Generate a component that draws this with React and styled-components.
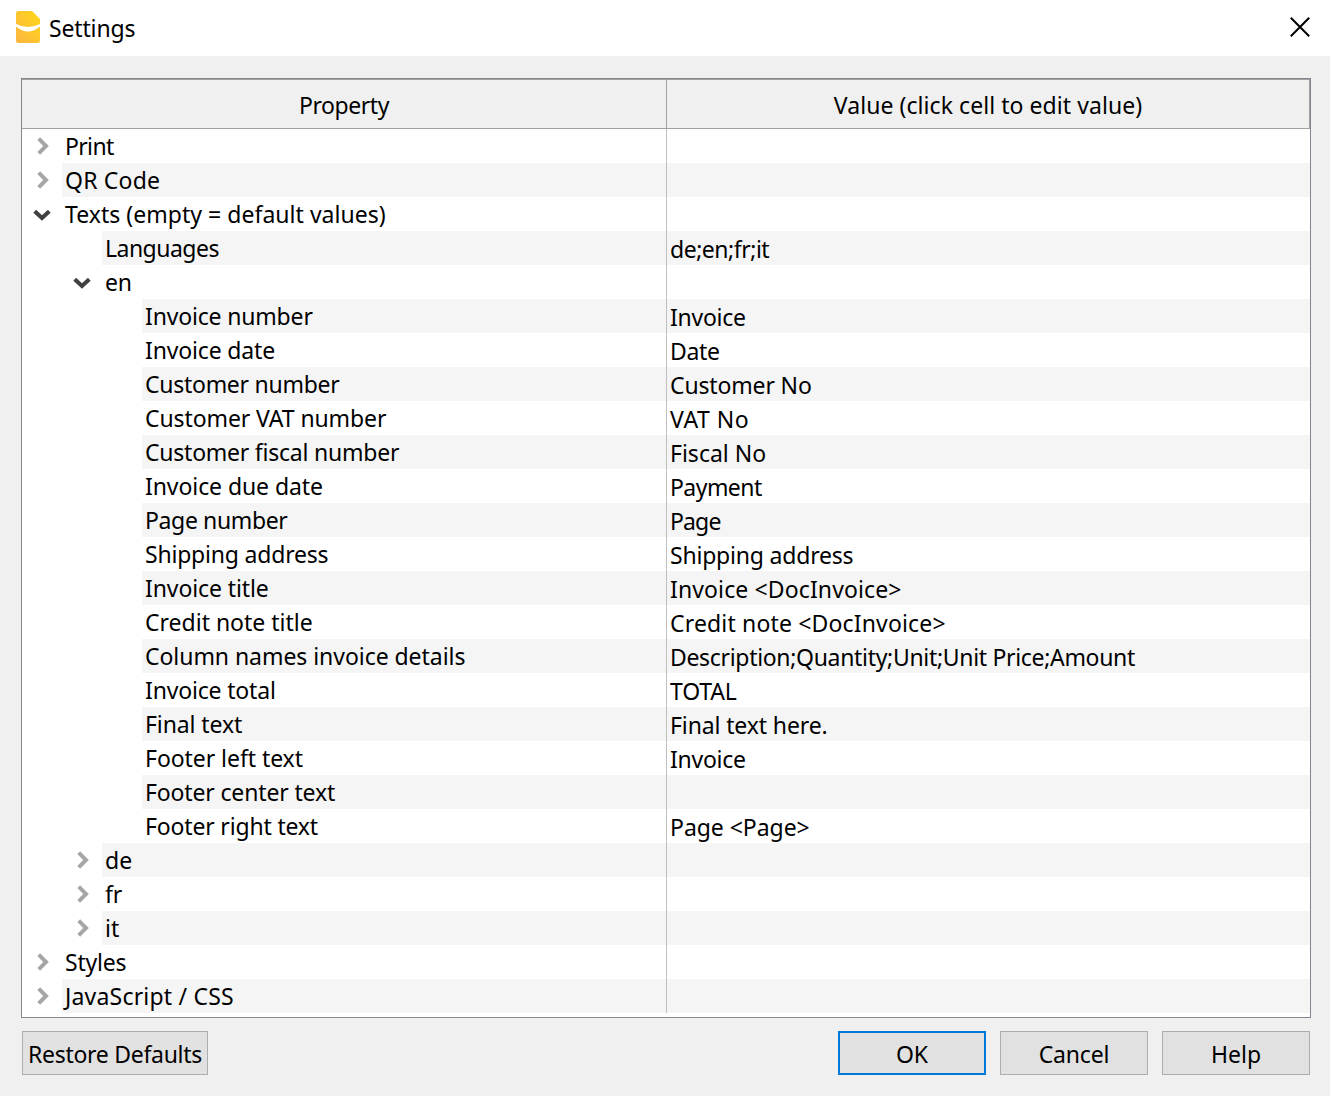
import React from "react";
import styled, { createGlobalStyle } from "styled-components";

const GlobalStyle = createGlobalStyle`
  *, *::before, *::after { box-sizing: border-box; }
  body {
    margin: 0;
    background: #f0f0f0;
    font-family: "Noto Sans", "Open Sans", sans-serif;
    font-size: 23px;
    color: #000;
  }
`;

const Dialog = styled.main`
  display: flex;
  flex-direction: column;
  width: 1330px;
  height: 1096px;
  background: #f0f0f0;
`;

const TitleBar = styled.header`
  display: flex;
  align-items: center;
  height: 56px;
  padding: 0 20px 0 16px;
  background: #fff;
`;

const Logo = styled.svg`
  width: 24px;
  height: 32px;
  margin-top: -2px;
`;

const Title = styled.h1`
  flex: 1;
  margin: 0 0 0 9px;
  font-size: 23px;
  font-weight: 400;
  line-height: 32px;
  letter-spacing: -0.15px;
`;

const CloseButton = styled.button`
  display: flex;
  width: 20px;
  height: 20px;
  margin-top: -2px;
  padding: 0;
  border: 0;
  background: none;
`;

const Tree = styled.section`
  display: flex;
  flex-direction: column;
  width: 1290px;
  height: 940px;
  margin: 22px 0 0 21px;
  border: 1px solid #828790;
  background: #fff;
`;

const HeaderRow = styled.div`
  display: grid;
  grid-template-columns: 645px 643px;
  height: 50px;
  border-top: 1px solid #a0a0a0;
  border-bottom: 1px solid #a0a0a0;
  background: #f0f0f0;
`;

const HeaderCell = styled.div`
  display: flex;
  justify-content: center;
  height: 48px;
  border-right: 1px solid #a0a0a0;
  line-height: 50px;
  letter-spacing: ${(p) => p.$track ?? 0}px;
  white-space: pre;
`;

const Row = styled.div`
  display: grid;
  grid-template-columns: ${(p) => 40 + p.$level * 40}px 1fr 643px;
  grid-template-rows: 34px;
  height: 34px;
`;

const Branch = styled.div`
  display: flex;
  justify-content: flex-end;
  padding: 7px 10px 0 0;
`;

const Cell = styled.div`
  height: 34px;
  padding-left: 3px;
  border-right: ${(p) => (p.$value ? "0" : "1px solid #c0c0c0")};
  background: ${(p) => (p.$shaded ? "#f5f5f5" : "#fff")};
  line-height: ${(p) => (p.$value ? 36 : 34)}px;
  letter-spacing: ${(p) => p.$track ?? 0}px;
  white-space: pre;
`;

const Footer = styled.footer`
  display: flex;
  gap: 14px;
  padding: 13px 20px 0 22px;
`;

const Spacer = styled.div`
  flex: 1;
`;

const Button = styled.button`
  width: ${(p) => p.$width ?? 148}px;
  height: 44px;
  padding: 2px 0 0;
  border: ${(p) => (p.$primary ? "2px solid #0078d7" : "1px solid #adadad")};
  background: #e1e1e1;
  color: #000;
  font: inherit;
  line-height: 32px;
  letter-spacing: ${(p) => p.$track ?? 0}px;
  white-space: nowrap;
`;

const Chevron = ({ open }) => (
  <svg width="20" height="20" viewBox="0 0 20 20" fill="none" stroke={open ? "#404040" : "#a6a6a6"} strokeWidth="4">
    <path d={open ? "M2.700 7.200 10 14l7.300-6.800" : "M6.700 2.700 14 10l-7.300 7.300"} />
  </svg>
);

// level, name, name tracking, value, value tracking, branch state
const rows = [
  [0, "Print", -0.65, "", 0, "closed"],
  [0, "QR Code", 0.2, "", 0, "closed"],
  [0, "Texts (empty = default values)", 0.03, "", 0, "open"],
  [1, "Languages", -0.52, "de;en;fr;it", -0.48],
  [1, "en", -0.1, "", 0, "open"],
  [2, "Invoice number", -0.17, "Invoice", -0.25],
  [2, "Invoice date", -0.15, "Date", -0.3],
  [2, "Customer number", -0.27, "Customer No", -0.15],
  [2, "Customer VAT number", -0.1, "VAT No", 0.5],
  [2, "Customer fiscal number", -0.23, "Fiscal No", 0],
  [2, "Invoice due date", -0.08, "Payment", -0.55],
  [2, "Page number", -0.36, "Page", -0.85],
  [2, "Shipping address", -0.2, "Shipping address", -0.2],
  [2, "Invoice title", -0.1, "Invoice <DocInvoice>", 0.12],
  [2, "Credit note title", 0, "Credit note <DocInvoice>", 0.16],
  [2, "Column names invoice details", -0.05, "Description;Quantity;Unit;Unit Price;Amount", -0.32],
  [2, "Invoice total", -0.17, "TOTAL", -0.2],
  [2, "Final text", -0.1, "Final text here.", -0.12],
  [2, "Footer left text", -0.06, "Invoice", -0.25],
  [2, "Footer center text", -0.15, "", 0],
  [2, "Footer right text", -0.17, "Page <Page>", -0.04],
  [1, "de", 0, "", 0, "closed"],
  [1, "fr", -0.2, "", 0, "closed"],
  [1, "it", 0, "", 0, "closed"],
  [0, "Styles", -0.2, "", 0, "closed"],
  [0, "JavaScript / CSS", 0.2, "", 0, "closed"],
];

export default function App() {
  return (
    <Dialog>
      <GlobalStyle />
      <TitleBar>
        <Logo viewBox="0 0 24 32">
          <defs>
            <linearGradient id="gold" x1="1" y1="0" x2="0" y2="1">
              <stop offset="0" stopColor="#fdd719" />
              <stop offset="1" stopColor="#fdb541" />
            </linearGradient>
          </defs>
          <path fill="url(#gold)" d="M2.500 0h13.500l8 8v21.500a2.500 2.500 0 0 1-2.500 2.500h-19a2.500 2.500 0 0 1-2.500-2.500v-27a2.500 2.500 0 0 1 2.500-2.500z" />
          <path fill="#fff" d="M0 13Q12 19 24 13V15.500Q12 25.500 0 15.500z" />
        </Logo>
        <Title>Settings</Title>
        <CloseButton aria-label="Close">
          <svg width="20" height="20" viewBox="0 0 20 20" stroke="#000" strokeWidth="2">
            <path d="M.8.8l18.400 18.400M19.200.8.8 19.200" />
          </svg>
        </CloseButton>
      </TitleBar>
      <Tree>
        <HeaderRow>
          <HeaderCell $track={-0.43}>Property</HeaderCell>
          <HeaderCell $track={0.06}>Value (click cell to edit value)</HeaderCell>
        </HeaderRow>
        {rows.map(([level, name, nameTrack, value, valueTrack, state], i) => (
          <Row key={i} $level={level}>
            <Branch>{state && <Chevron open={state === "open"} />}</Branch>
            <Cell $shaded={i % 2 === 1} $track={nameTrack}>{name}</Cell>
            <Cell $value $shaded={i % 2 === 1} $track={valueTrack}>{value}</Cell>
          </Row>
        ))}
      </Tree>
      <Footer>
        <Button $width={186} $track={-0.28}>Restore Defaults</Button>
        <Spacer />
        <Button $primary>OK</Button>
        <Button $track={-0.15}>Cancel</Button>
        <Button>Help</Button>
      </Footer>
    </Dialog>
  );
}
